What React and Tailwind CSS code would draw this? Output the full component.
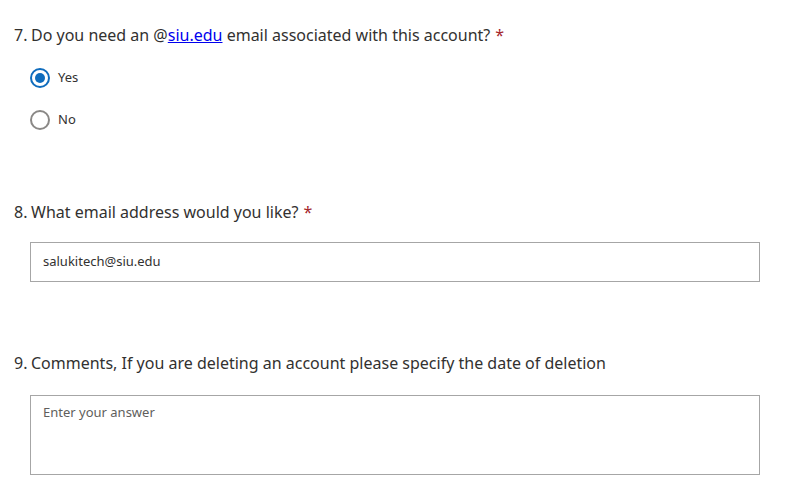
export default function App() {
  const font = { fontFamily: '"Segoe UI", "Noto Sans", "Open Sans", sans-serif' };
  return (
    <div className="w-[785px] h-[483px] bg-white text-[#323130] overflow-hidden" style={font}>
      <div className="pl-[14px] pr-[25px] pt-[23px]">
        <div className="flex items-baseline text-[16px] leading-[24px]">
          <span className="w-[17px]">7.</span>
          <span>
            Do you need an @<a href="#" className="text-[#0000ee] underline">siu.edu</a> email associated with this account?
            <span className="text-[#a4262c] ml-[5px]">*</span>
          </span>
        </div>
        <div className="pl-[16px] mt-[21px] flex flex-col gap-[22px]">
          <label className="flex items-center gap-[8px] h-[20px] text-[13px]">
            <span className="w-[20px] h-[20px] rounded-full border-2 border-[#0f6cbd] flex items-center justify-center">
              <span className="w-[10px] h-[10px] rounded-full bg-[#0f6cbd]"></span>
            </span>
            <span>Yes</span>
          </label>
          <label className="flex items-center gap-[8px] h-[20px] text-[13px]">
            <span className="w-[20px] h-[20px] rounded-full border-2 border-[#8a8886]"></span>
            <span>No</span>
          </label>
        </div>

        <div className="mt-[70px] flex items-baseline text-[16px] leading-[24px]">
          <span className="w-[17px]">8.</span>
          <span>
            What email address would you like?
            <span className="text-[#a4262c] ml-[5px]">*</span>
          </span>
        </div>
        <div className="ml-[16px] mt-[18px] h-[40px] border border-[#a6a6a6] flex items-center px-[12px] text-[13px]">
          salukitech@siu.edu
        </div>

        <div className="mt-[69px] flex items-baseline text-[16px] leading-[24px]">
          <span className="w-[17px]">9.</span>
          <span>Comments, If you are deleting an account please specify the date of deletion</span>
        </div>
        <div className="ml-[16px] mt-[20px] h-[80px] border border-[#a6a6a6] px-[12px] pt-[7px] text-[13px] text-[#605e5c]">
          Enter your answer
        </div>
      </div>
    </div>
  );
}
